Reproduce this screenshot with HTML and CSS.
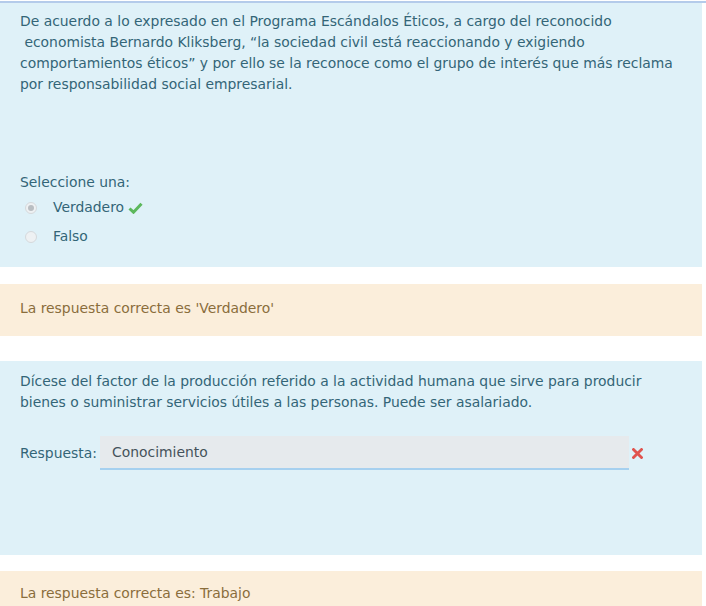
FILE: index.html
```html
<!DOCTYPE html>
<html lang="es">
<head>
<meta charset="utf-8">
<link rel="stylesheet" href="styles.css">
</head>
<body>
<div class="page">
  <div class="formulation q1">
    <p class="qtext">De acuerdo a lo expresado en el Programa Escándalos Éticos, a cargo del reconocido<br>&nbsp;economista Bernardo Kliksberg, “la sociedad civil está reaccionando y exigiendo comportamientos éticos” y por ello se la reconoce como el grupo de interés que más reclama por responsabilidad social empresarial.</p>
    <div class="ablock">
      <div class="prompt">Seleccione una:</div>
      <div class="answer">
        <label class="option"><span class="radio checked"></span><span class="label">Verdadero</span>
          <svg class="tick" width="15" height="12" viewBox="0 0 15 12"><path d="M1.5 6.5 L5.5 10.2 L13.5 1.8" fill="none" stroke="#5cb85c" stroke-width="3" stroke-linejoin="miter"/></svg>
        </label>
        <label class="option"><span class="radio"></span><span class="label">Falso</span></label>
      </div>
    </div>
  </div>
  <div class="outcome o1">La respuesta correcta es 'Verdadero'</div>

  <div class="formulation q2">
    <p class="qtext">Dícese del factor de la producción referido a la actividad humana que sirve para producir bienes o suministrar servicios útiles a las personas. Puede ser asalariado.</p>
    <div class="resp">
      <span class="resp-label">Respuesta:</span>
      <span class="input">Conocimiento</span>
      <svg class="cross" width="11" height="11" viewBox="0 0 11 11"><path d="M1.5 1.5 L9.5 9.5 M9.5 1.5 L1.5 9.5" stroke="#e0534e" stroke-width="2.8" stroke-linecap="square"/></svg>
    </div>
  </div>
  <div class="outcome o2">La respuesta correcta es: Trabajo</div>
</div>
</body>
</html>
```
FILE: styles.css
```css
html, body {
  margin: 0;
  padding: 0;
  background: #fff;
}
body {
  padding-top: 1px;
  font-family: "DejaVu Sans", sans-serif;
  font-size: 13.9px;
  line-height: 21px;
}
.page {
  border-top: 2px solid #b4cbea;
}
.formulation {
  background: #dff1f8;
  color: #336577;
  width: 702px;
  box-sizing: border-box;
  padding: 8px 20px 0 20px;
}
.q1 {
  height: 264px;
}
.qtext {
  margin: 0;
}
.ablock {
  margin-top: 77px;
}
.prompt {
  height: 21px;
}
.answer {
  display: flex;
  flex-direction: column;
}
.option {
  display: flex;
  align-items: center;
  height: 29px;
}
.radio {
  width: 12px;
  height: 12px;
  border-radius: 50%;
  border: 1px solid #d5d9dc;
  background: #eef1f3;
  box-sizing: border-box;
  margin-left: 5px;
  margin-right: 16px;
  position: relative;
}
.radio.checked::after {
  content: "";
  position: absolute;
  left: 2px;
  top: 2px;
  width: 6px;
  height: 6px;
  border-radius: 50%;
  background: #b9bec2;
}
.tick {
  margin-left: 4px;
}
.outcome {
  background: #fbeedb;
  color: #8a6d3b;
  width: 702px;
  box-sizing: border-box;
  padding: 0 20px;
  display: flex;
  align-items: center;
}
.o1 {
  height: 52px;
  margin-top: 17px;
  margin-bottom: 25px;
  padding-bottom: 4px;
}
.q2 {
  height: 194px;
  padding-top: 10px;
}
.resp {
  display: flex;
  align-items: center;
  margin-top: 23px;
}
.resp-label {
  width: 80px;
  flex: none;
  white-space: nowrap;
}
.input {
  width: 529px;
  height: 34px;
  box-sizing: border-box;
  background: #e6eaed;
  border-bottom: 2px solid #a6d0ef;
  padding: 6px 12px 0 12px;
  color: #44525a;
}
.cross {
  margin-left: 3px;
}
.o2 {
  height: 44px;
  margin-top: 16px;
}
```
